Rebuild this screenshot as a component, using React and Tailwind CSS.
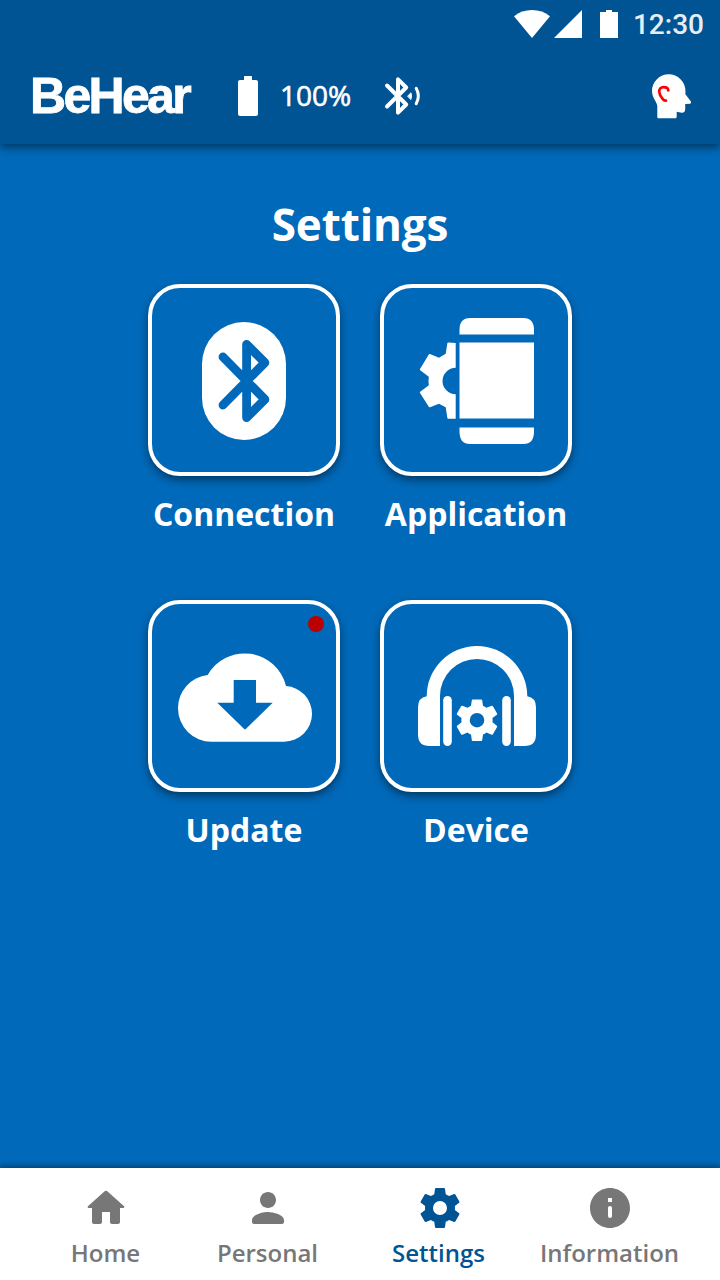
import React from 'react';

const GEAR_PATH =
    'M12,15.5A3.5,3.5 0 0,1 8.5,12A3.5,3.5 0 0,1 12,8.5A3.5,3.5 0 0,1 15.5,12A3.5,3.5 0 0,1 12,15.5M19.43,12.97C19.47,12.65 19.5,12.33 19.5,12C19.5,11.67 19.47,11.34 19.43,11L21.54,9.37C21.73,9.22 21.78,8.95 21.66,8.73L19.66,5.27C19.54,5.05 19.27,4.96 19.05,5.05L16.56,6.05C16.04,5.66 15.5,5.32 14.87,5.07L14.5,2.42C14.46,2.18 14.25,2 14,2H10C9.75,2 9.54,2.18 9.5,2.42L9.13,5.07C8.5,5.32 7.96,5.66 7.44,6.05L4.95,5.05C4.73,4.96 4.46,5.05 4.34,5.27L2.34,8.73C2.21,8.95 2.27,9.22 2.46,9.37L4.57,11C4.53,11.34 4.5,11.67 4.5,12C4.5,12.33 4.53,12.65 4.57,12.97L2.46,14.63C2.27,14.78 2.21,15.05 2.34,15.27L4.34,18.73C4.46,18.95 4.73,19.03 4.95,18.95L7.44,17.94C7.96,18.34 8.5,18.68 9.13,18.93L9.5,21.58C9.54,21.82 9.75,22 10,22H14C14.25,22 14.46,21.82 14.5,21.58L14.87,18.93C15.5,18.67 16.04,18.34 16.56,17.94L19.05,18.95C19.27,19.03 19.54,18.95 19.66,18.73L21.66,15.27C21.78,15.05 21.73,14.78 21.54,14.63L19.43,12.97Z';

const NAV_ITEMS = [
    {
        label: 'Home',
        width: 'w-[162px]',
        path: 'M10 19v-5h4v5c0 .55.45 1 1 1h3c.55 0 1-.45 1-1v-7h1.7c.46 0 .68-.57.33-.87L12.67 3.6c-.38-.34-.96-.34-1.34 0l-8.36 7.53c-.34.3-.13.87.33.87H5v7c0 .55.45 1 1 1h3c.55 0 1-.45 1-1z',
    },
    {
        label: 'Personal',
        width: 'w-[162px]',
        path: 'M12 12c2.21 0 4-1.79 4-4s-1.79-4-4-4-4 1.79-4 4 1.79 4 4 4zm0 2c-2.67 0-8 1.34-8 4v1c0 .55.45 1 1 1h14c.55 0 1-.45 1-1v-1c0-2.66-5.33-4-8-4z',
    },
    { label: 'Settings', width: 'w-[180px]', path: GEAR_PATH, active: true },
    {
        label: 'Information',
        width: 'w-[162px]',
        path: 'M12 2C6.48 2 2 6.48 2 12s4.48 10 10 10 10-4.48 10-10S17.52 2 12 2zm0 15c-.55 0-1-.45-1-1v-4c0-.55.45-1 1-1s1 .45 1 1v4c0 .55-.45 1-1 1zm1-8h-2V7h2v2z',
    },
];

const StatusBar = () => (
    <div className="flex h-12 items-center justify-end pr-4">
        <svg className="h-7 w-9" viewBox="0 0 36 28" fill="#fff">
            <path d="M18 28 0 6.2C5 2.2 11.200 0 18 0s13 2.200 18 6.200z" />
        </svg>
        <svg className="ml-1 h-7 w-7" viewBox="0 0 28 28" fill="#fff">
            <path d="M0 28 28 0v28z" />
        </svg>
        <svg className="ml-[18px] h-7 w-[18px]" viewBox="0 0 18 28" fill="#fff">
            <path d="M0 2h6V0h6v2h6v26H0z" />
        </svg>
        <span className="mt-0.5 ml-[15px] font-['Roboto',sans-serif] text-[28px] leading-8 font-medium text-[#e6eef4]">12:30</span>
    </div>
);

const HeadIcon = () => (
    <svg className="h-[46px] w-10" viewBox="652 73 40 46">
        <path
            fill="#fff"
            d="M652 91a16.700 16.700 0 0 1 33.400 0v3.200l5.500 7.400c.5 1.100 0 2-1 2.100l-4.700.3v5.500c0 2-1.300 3.500-3.500 3.300l-5-1v5c0 .9-.5 1.500-1.400 1.500h-16.600c-.9 0-1.400-.5-1.400-1.400V106c0-3.500-5.300-8-5.300-15z"
        />
        <path
            fill="none"
            stroke="#ff0000"
            strokeWidth="2.7"
            strokeLinecap="round"
            d="M668.300 90.300c-.2-2.200-2.300-3.200-4.800-3.200-2.700 0-4.500 1.800-4.300 4.500.2 2.600 1.700 5.200 3.400 7.300 1 1.300 2 1.900 3.400 1.700"
        />
    </svg>
);

const AppHeader = () => (
    <div className="flex h-24 items-center pr-7 pl-[30px]">
        <span className="w-[208px] font-['Liberation_Sans',sans-serif] text-[50px] leading-none font-bold tracking-[-2.7px] [-webkit-text-stroke:0.8px_white]">
            BeHear
        </span>
        <svg className="h-10 w-5" viewBox="0 0 20 40" fill="#fff">
            <path d="M7 0h6c.6 0 1 .4 1 1v3h4a2 2 0 0 1 2 2v32a2 2 0 0 1-2 2H2a2 2 0 0 1-2-2V6a2 2 0 0 1 2-2h4V1c0-.6.400-1 1-1z" />
        </svg>
        <span className="mb-0.5 ml-[22px] w-[104px] text-[28px] leading-10 [-webkit-text-stroke:0.6px_white]">100%</span>
        <svg className="h-10 w-10" viewBox="384 76 40 40" fill="none" stroke="#fff" strokeLinecap="round" strokeLinejoin="round">
            <path strokeWidth="4" d="M387 85.500 406.200 104.500 398 112.700V79.300L406.200 87.500 387 106.500" />
            <path fill="#fff" strokeWidth="1" d="M407.800 96 411 92.800q1 3.200 0 6.400z" />
            <path strokeWidth="3" d="M416.200 88.300q4.300 7.700 0 15.400" />
        </svg>
        <div className="ml-auto">
            <HeadIcon />
        </div>
    </div>
);

const ConnectionIcon = () => (
    <>
        <rect x="50" y="34" width="84" height="118" rx="42" />
        <path
            d="M71 69 112.900 111.400 94.600 129.600V56.300L112.900 74.600 71 117"
            fill="none"
            stroke="#0069b9"
            strokeWidth="8.800"
            strokeLinecap="round"
            strokeLinejoin="round"
        />
    </>
);

const ApplicationIcon = () => (
    <>
        <path d="M75.500 46.500V42q0-12 10.500-12h53.500Q150 30 150 42v4.500z" />
        <path d="M75.500 54.500H150v76H75.500z" />
        <path d="M75.500 139.500H150v4Q150 156 139.500 156H86q-10.500 0-10.500-12.500z" />
        <path d="M71.700 55v24.800a13.200 13.200 0 0 0 0 26.400v24.500h-7.400q-.9 0-1-1l-1.600-10.400-6.700-3.600-9 3.500q-.8.200-1.200-.5L36 105q-.4-.8.200-1.200l8.600-6.600q-.6-4.200 0-8.500l-8.600-6.500q-.6-.4-.2-1.200l8.800-14.500q.4-.8 1.200-.5l9 3.700 6.700-3.900 1.600-10.300q.1-1 1-1z" />
    </>
);

const UpdateIcon = () => (
    <>
        <path d="M59.500 137.700A33.500 33.400 0 0 1 26 104.300A33.500 33.400 0 0 1 55.700 70.900A42.500 42.500 0 0 1 134 82.100A27.800 27.800 0 0 1 160 109.900A27.800 27.800 0 0 1 132.200 137.700z" />
        <path fill="#0069b9" d="M81.700 76H104v22.700h16.700L93.800 125q-.8.700-1.600 0L65.300 98.700h16.400z" />
    </>
);

const DeviceIcon = () => (
    <>
        <path d="M56 141.900H45.500Q34 141.900 34 130.400V103.500Q34 93.500 42.700 92.300A50.300 50.300 0 0 1 143.300 92.300Q152 93.500 152 103.500v26.900q0 11.500-11.500 11.500H130V92A37 37 0 0 0 56 92z" />
        <rect x="59.200" y="92" width="8.600" height="49.900" rx="4.300" />
        <rect x="118.200" y="92" width="8.600" height="49.900" rx="4.300" />
        <path transform="translate(68.040 91.240) scale(2.080)" d={GEAR_PATH} />
    </>
);

const SettingsTile = ({ label, Icon, alert }) => (
    <div className="flex w-48 flex-col items-center">
        <button className="relative h-48 w-48 rounded-[32px] border-4 border-white bg-[#0069b9] shadow-[0_4px_8px_rgba(0,0,0,0.45)]">
            <svg className="h-full w-full" viewBox="0 0 184 184" fill="#fff">
                <Icon />
            </svg>
            {alert && <span className="absolute top-3 right-3 h-4 w-4 rounded-full bg-[#ba0000]" />}
        </button>
        <span className="mt-4 text-[32px] leading-[44px] font-bold whitespace-nowrap">{label}</span>
    </div>
);

const BottomNav = () => (
    <nav className="relative flex h-28 bg-white pl-[25px] shadow-[0_-2px_6px_rgba(0,0,0,0.4)]">
        {NAV_ITEMS.map((item) => (
            <div
                key={item.label}
                className={`flex shrink-0 flex-col items-center pt-4 ${item.width} ${item.active ? 'text-[#005493]' : 'text-[#777777]'}`}
            >
                <svg className={`h-12 w-12 ${item.active ? 'ml-[2px]' : ''}`} viewBox="0 0 24 24" fill="currentColor">
                    <path d={item.path} />
                </svg>
                <span className="mt-[5px] mr-px text-[24px] leading-8 font-semibold">{item.label}</span>
            </div>
        ))}
    </nav>
);

const App = () => (
    <div className="flex h-[1280px] w-[720px] flex-col overflow-hidden bg-[#0069b9] font-['Open_Sans',sans-serif] text-white">
        <header className="relative h-36 shrink-0 bg-[#005493] shadow-[0_4px_8px_rgba(0,0,0,0.45)]">
            <StatusBar />
            <AppHeader />
        </header>

        <main className="flex flex-1 flex-col items-center">
            <h1 className="mt-[50px] text-[44px] leading-[60px] font-bold tracking-[-0.1px]">Settings</h1>
            <div className="mt-[30px] grid grid-cols-2 gap-x-10 gap-y-16">
                <SettingsTile label="Connection" Icon={ConnectionIcon} />
                <SettingsTile label="Application" Icon={ApplicationIcon} />
                <SettingsTile label="Update" Icon={UpdateIcon} alert />
                <SettingsTile label="Device" Icon={DeviceIcon} />
            </div>
        </main>

        <BottomNav />
    </div>
);

export default App;
